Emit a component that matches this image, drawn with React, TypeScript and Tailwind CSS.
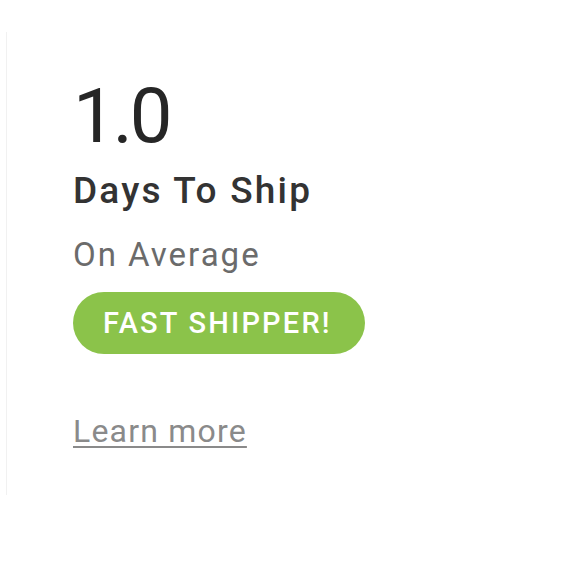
export default function App() {
  return (
    <div className="w-[580px] h-[580px] bg-white" style={{ fontFamily: "Roboto, 'Liberation Sans', sans-serif" }}>
      <div className="pt-[32px] pl-[6px]">
        <div className="h-[463px] border-l border-[#f1f1f1] pl-[66px] pt-[46px] flex flex-col items-start">
          <div className="text-[76px] leading-none tracking-[-3px] text-[#262626]">1.0</div>
          <div className="mt-[18px] text-[37px] leading-none font-medium tracking-[2.2px] text-[#333333]">Days To Ship</div>
          <div className="mt-[29px] text-[33px] leading-none tracking-[2px] text-[#6b6b6b]">On Average</div>
          <div className="mt-[21px] h-[62px] pl-[30px] pr-[33px] rounded-full bg-[#8bc34a] flex items-center">
            <span className="text-[29px] leading-none font-medium tracking-[2.2px] text-white">FAST SHIPPER!</span>
          </div>
          <a href="#" className="mt-[61px] text-[32px] leading-none tracking-[1.2px] text-[#8a8a8a] underline underline-offset-[4px] decoration-[2px]">Learn more</a>
        </div>
      </div>
    </div>
  );
}
